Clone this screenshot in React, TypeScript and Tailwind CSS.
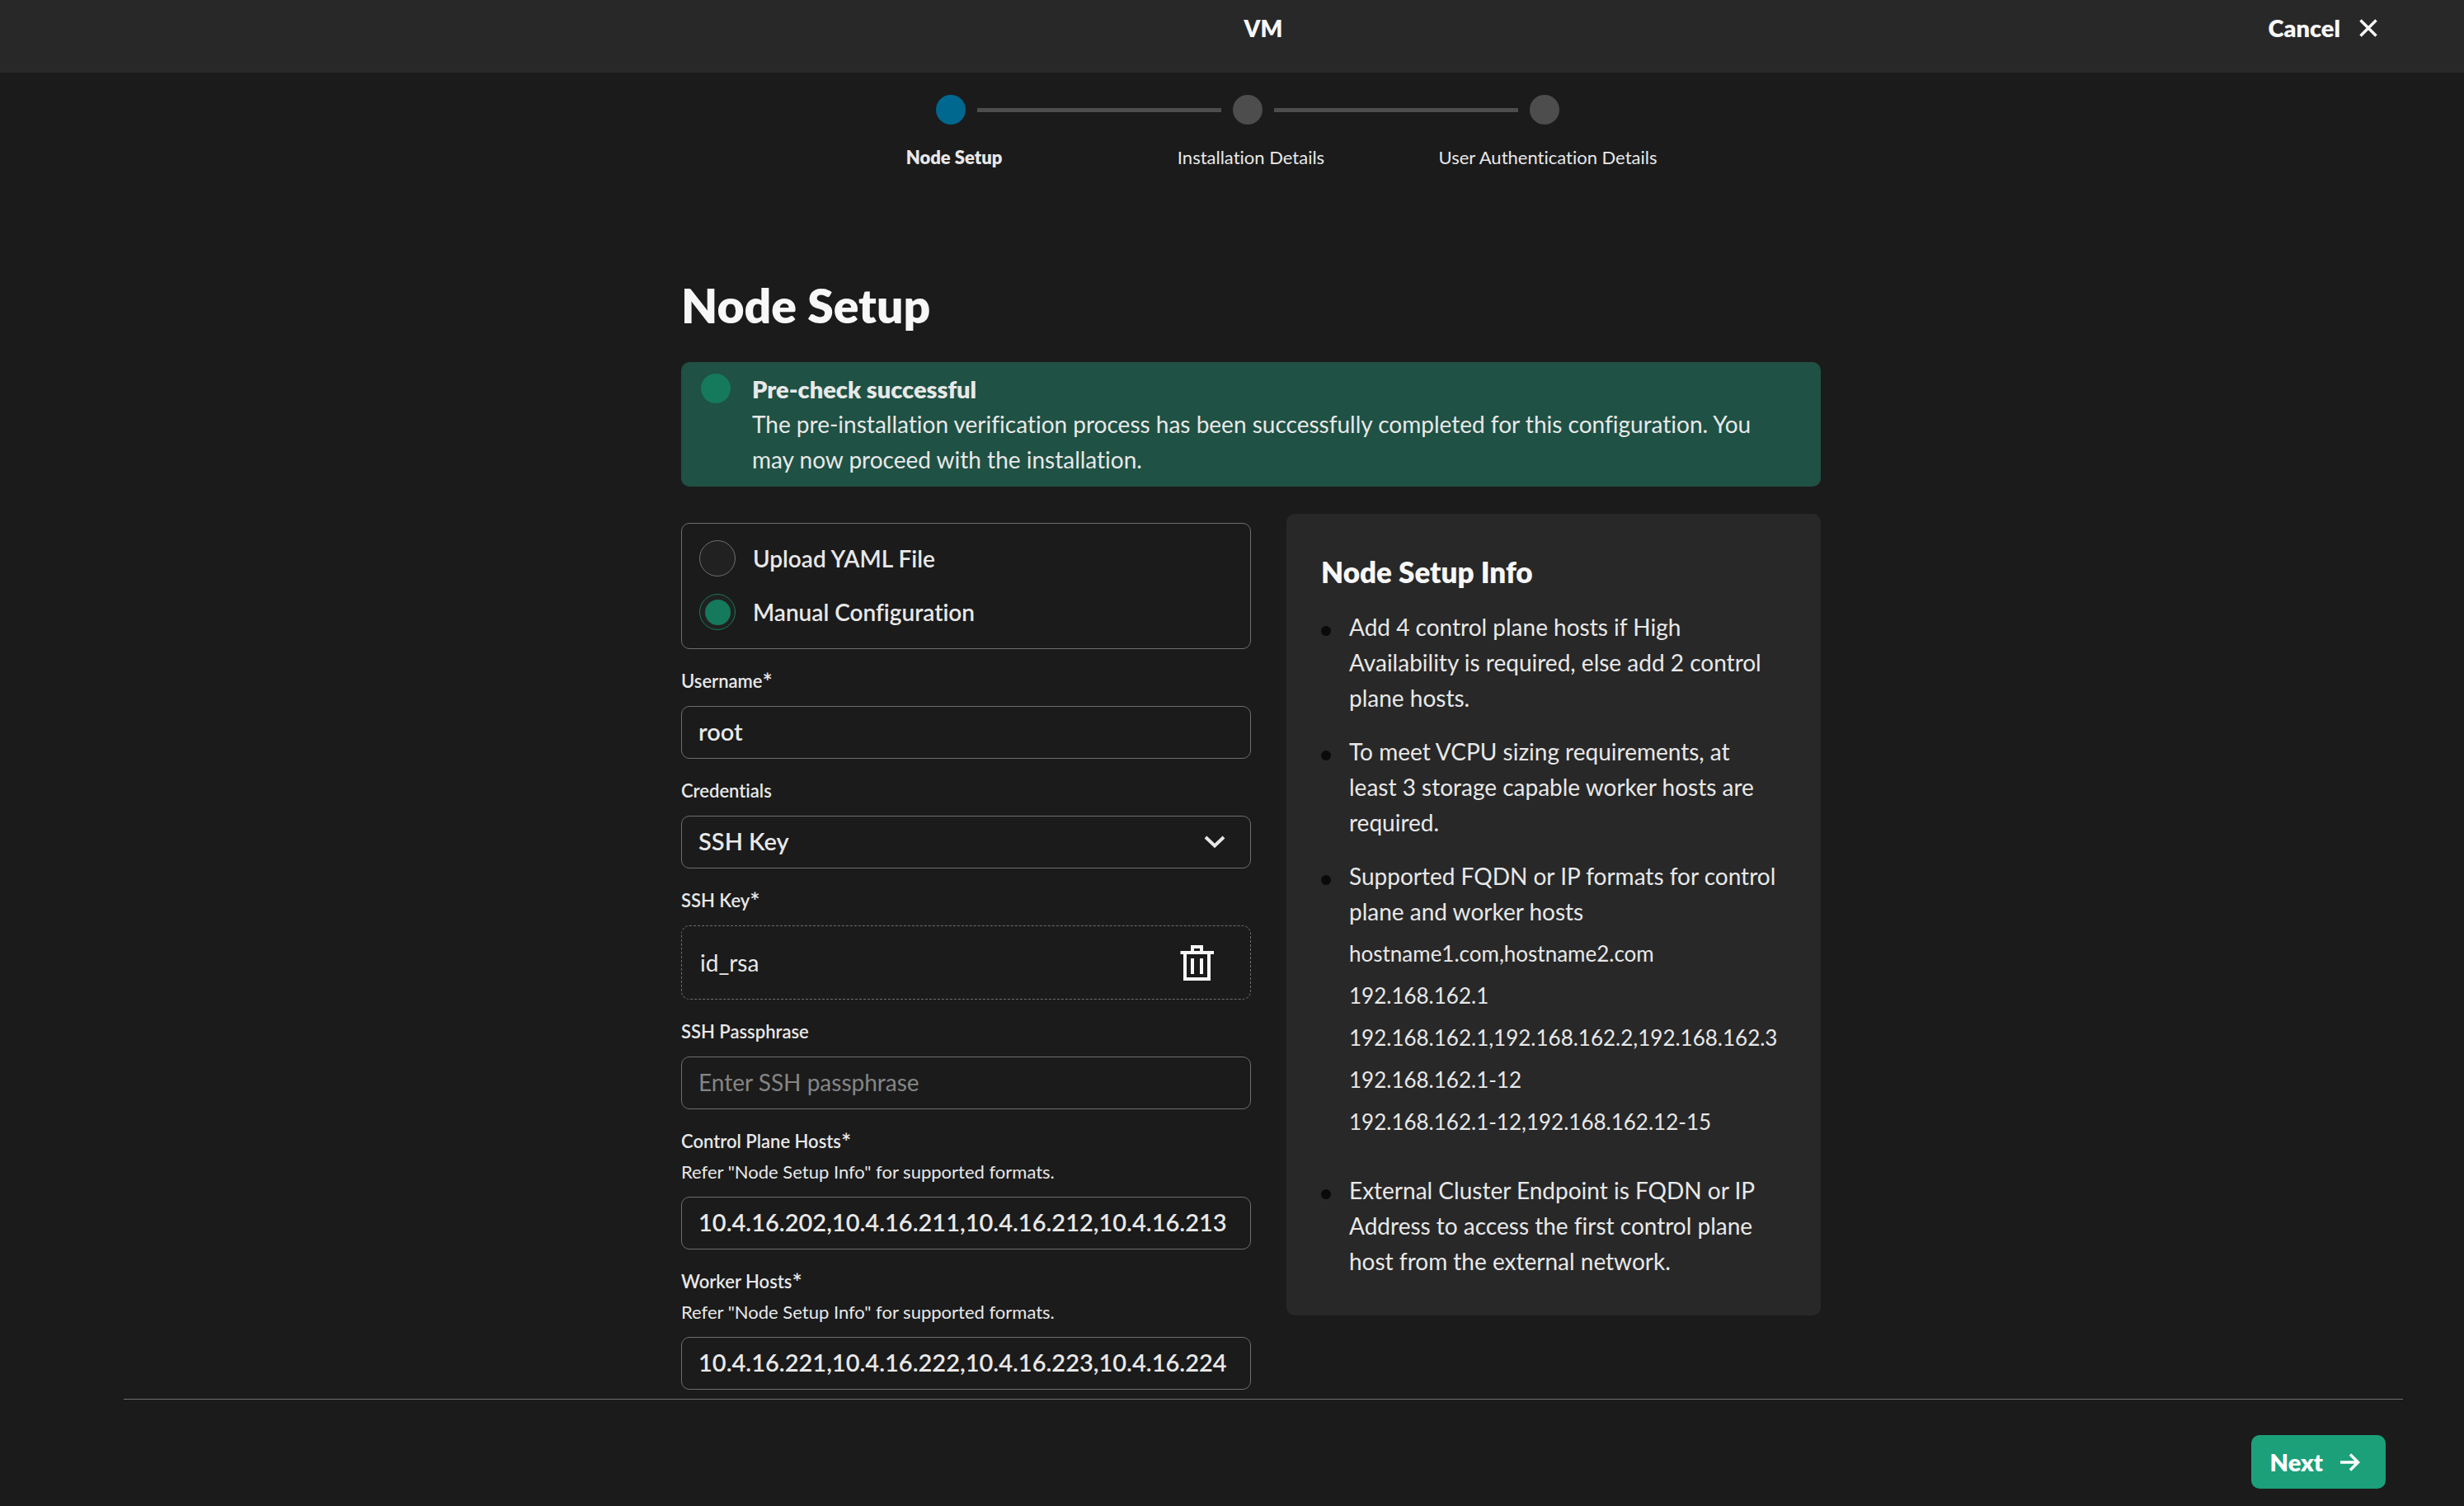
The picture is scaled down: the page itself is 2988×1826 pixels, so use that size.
import { useState } from "react";
import type { ReactNode } from "react";

const steps = ["Node Setup", "Installation Details", "User Authentication Details"];

const ipFormats = [
  "hostname1.com,hostname2.com",
  "192.168.162.1",
  "192.168.162.1,192.168.162.2,192.168.162.3",
  "192.168.162.1-12",
  "192.168.162.1-12,192.168.162.12-15",
];

function CloseIcon() {
  return (
    <svg className="size-6" viewBox="0 0 24 24" fill="none" stroke="currentColor" strokeWidth="3.5" aria-hidden="true">
      <path d="M2.5 2.5l19 19M21.5 2.5l-19 19" />
    </svg>
  );
}

function ArrowIcon() {
  return (
    <svg className="size-9" viewBox="0 0 36 36" fill="none" stroke="currentColor" strokeWidth="3.5" aria-hidden="true">
      <path d="M6 18h22M18 8.5l9.5 9.5-9.5 9.5" />
    </svg>
  );
}

function TrashIcon() {
  return (
    <svg className="size-12" viewBox="0 0 48 48" fill="none" stroke="currentColor" strokeWidth="4" aria-hidden="true">
      <path d="M9 12v32h29V12M3.5 12h40.5M18 12V5h11v7M18 19v19M29 19v19" />
    </svg>
  );
}

function ChevronIcon() {
  return (
    <svg
      className="pointer-events-none absolute top-1/2 right-[30px] size-7 -translate-y-1/2"
      viewBox="0 0 28 28"
      fill="none"
      stroke="currentColor"
      strokeWidth="4"
      aria-hidden="true"
    >
      <path d="M3 8l11 10.5L25 8" />
    </svg>
  );
}

function Stepper() {
  return (
    <nav aria-label="Progress" className="flex flex-col items-center gap-[26px] pt-[27px]">
      <div className="flex items-center gap-3.5 pr-2" aria-hidden="true">
        <span className="size-9 rounded-full bg-[#00678f]" />
        <span className="h-[5px] w-[296px] bg-[#4d4d4d]" />
        <span className="size-9 rounded-full bg-[#4d4d4d]" />
        <span className="h-[5px] w-[296px] bg-[#4d4d4d]" />
        <span className="size-9 rounded-full bg-[#4d4d4d]" />
      </div>
      <ol className="grid w-full max-w-[1080px] grid-cols-3 text-center text-[22px] leading-7">
        {steps.map((step, i) => (
          <li key={step} aria-current={i === 0 ? "step" : undefined} className={i === 0 ? "font-extrabold" : ""}>
            {step}
          </li>
        ))}
      </ol>
    </nav>
  );
}

function Radio({ label, checked, onChange }: { label: string; checked: boolean; onChange: () => void }) {
  return (
    <label className="flex items-center gap-[21px] text-[28px] leading-[44px] font-semibold">
      <input
        type="radio"
        name="mode"
        checked={checked}
        onChange={onChange}
        className="grid size-11 appearance-none place-items-center rounded-full border border-[#6e6e6e] bg-[#212121] checked:border-[#17795a] checked:before:size-[31px] checked:before:rounded-full checked:before:bg-[#147a5b]"
      />
      {label}
    </label>
  );
}

function Field({
  id,
  label,
  required,
  help,
  children,
}: {
  id: string;
  label: string;
  required?: boolean;
  help?: string;
  children: ReactNode;
}) {
  return (
    <div className="flex flex-col gap-4">
      <div className="flex flex-col gap-[9px] text-[22px] leading-7">
        <label htmlFor={id} className="font-semibold">
          {label}
          {required && <span className="align-[-3px] text-[29px] leading-[0]">*</span>}
        </label>
        {help && <p>{help}</p>}
      </div>
      {children}
    </div>
  );
}

const control =
  "h-16 w-full appearance-none rounded-[10px] border border-[#6e6e6e] bg-transparent px-5 pb-[3px] text-[29px] font-semibold placeholder:text-[28px] placeholder:font-normal placeholder:text-[#858585]";

function InfoItem({ children }: { children: ReactNode }) {
  return (
    <li className="flex gap-[22px]">
      <span className="mt-5 size-3 shrink-0 rounded-full bg-[#0a0a0a]" />
      <div className="min-w-0 flex-1">{children}</div>
    </li>
  );
}

export default function App() {
  const [mode, setMode] = useState("manual");
  const [username, setUsername] = useState("root");
  const [passphrase, setPassphrase] = useState("");
  const [controlHosts, setControlHosts] = useState("10.4.16.202,10.4.16.211,10.4.16.212,10.4.16.213");
  const [workerHosts, setWorkerHosts] = useState("10.4.16.221,10.4.16.222,10.4.16.223,10.4.16.224");

  return (
    <div className="flex min-h-screen flex-col bg-[#1b1b1b] font-[Lato,sans-serif] text-[#e8e8e8] [font-variant-ligatures:none]">
      <header className="grid h-[88px] grid-cols-[1fr_auto_1fr] items-start bg-[#282828] pt-3 pr-[74px] pl-[150px] text-[28px] leading-[44px] font-extrabold text-[#f7f7f7]">
        <h1 className="col-start-2">VM</h1>
        <button type="button" className="flex items-center gap-[22px] justify-self-end pr-[30px] text-[29px]">
          Cancel
          <CloseIcon />
        </button>
      </header>

      <main className="flex-1 pl-[46px]">
        <Stepper />

        <form id="node-setup" className="mx-auto w-full max-w-[1382px] pt-[133px]">
          <h2 className="text-[57px] leading-[64px] font-extrabold text-[#f7f7f7]">Node Setup</h2>

          <section role="status" className="mt-[37px] flex gap-[26px] rounded-[10px] bg-[#1f5144] px-6 py-[11px] text-[28px] leading-[43px]">
            <span className="mt-[3px] size-9 shrink-0 rounded-full bg-[#147a5b]" />
            <div className="pr-8">
              <h3 className="text-[29px] font-extrabold">Pre-check successful</h3>
              <p>
                The pre-installation verification process has been successfully completed for this configuration. You may
                now proceed with the installation.
              </p>
            </div>
          </section>

          <div className="mt-[33px] grid grid-cols-[691fr_648fr] items-start gap-[43px]">
            <div className="flex flex-col gap-[25px] pt-[11px]">
              <fieldset
                aria-label="Configuration method"
                className="flex flex-col gap-[21px] rounded-[10px] border border-[#6e6e6e] px-[21px] pt-5 pb-[22px]"
              >
                <Radio label="Upload YAML File" checked={mode === "yaml"} onChange={() => setMode("yaml")} />
                <Radio label="Manual Configuration" checked={mode === "manual"} onChange={() => setMode("manual")} />
              </fieldset>

              <Field id="username" label="Username" required>
                <input id="username" className={control} value={username} onChange={(e) => setUsername(e.target.value)} />
              </Field>

              <Field id="credentials" label="Credentials">
                <div className="relative">
                  <select id="credentials" className={control}>
                    <option>SSH Key</option>
                  </select>
                  <ChevronIcon />
                </div>
              </Field>

              <Field id="ssh-key" label="SSH Key" required>
                <div className="flex h-[90px] items-center justify-between rounded-[10px] border border-dashed border-[#6e6e6e] pr-10 pl-[22px] text-[28px]">
                  <span>id_rsa</span>
                  <button id="ssh-key" type="button" aria-label="Remove SSH key" className="text-[#f7f7f7]">
                    <TrashIcon />
                  </button>
                </div>
              </Field>

              <Field id="passphrase" label="SSH Passphrase">
                <input
                  id="passphrase"
                  type="text"
                  placeholder="Enter SSH passphrase"
                  className={control}
                  value={passphrase}
                  onChange={(e) => setPassphrase(e.target.value)}
                />
              </Field>

              <Field
                id="control-hosts"
                label="Control Plane Hosts"
                required
                help={'Refer "Node Setup Info" for supported formats.'}
              >
                <input
                  id="control-hosts"
                  className={control}
                  value={controlHosts}
                  onChange={(e) => setControlHosts(e.target.value)}
                />
              </Field>

              <Field
                id="worker-hosts"
                label="Worker Hosts"
                required
                help={'Refer "Node Setup Info" for supported formats.'}
              >
                <input
                  id="worker-hosts"
                  className={control}
                  value={workerHosts}
                  onChange={(e) => setWorkerHosts(e.target.value)}
                />
              </Field>
            </div>

            <aside className="rounded-[10px] bg-[#282828] px-[42px] pt-12 pb-11">
              <h3 className="text-[35px] leading-[44px] font-extrabold text-[#f7f7f7]">Node Setup Info</h3>
              <ul className="mt-6 flex flex-col gap-[22px] pr-1 text-[28px] leading-[43px]">
                <InfoItem>
                  Add 4 control plane hosts if High Availability is required, else add 2 control plane hosts.
                </InfoItem>
                <InfoItem>
                  To meet VCPU sizing requirements, at least 3 storage capable worker hosts are required.
                </InfoItem>
                <InfoItem>
                  Supported FQDN or IP formats for control plane and worker hosts
                  <ul className="mt-1 mb-3.5 text-[26px] leading-[51px] whitespace-nowrap">
                    {ipFormats.map((format) => (
                      <li key={format}>{format}</li>
                    ))}
                  </ul>
                </InfoItem>
                <InfoItem>
                  External Cluster Endpoint is FQDN or IP Address to access the first control plane host from the external
                  network.
                </InfoItem>
              </ul>
            </aside>
          </div>
        </form>
      </main>

      <footer className="mt-2.5 mr-[74px] mb-[21px] ml-[150px] flex justify-end border-t border-[#6e6e6e] pt-[43px] pr-[21px]">
        <button
          type="button"
          className="flex h-[65px] items-center gap-[15px] rounded-[10px] bg-[#1ba07a] pr-[25px] pl-[23px] text-[29px] font-extrabold text-white"
        >
          Next
          <ArrowIcon />
        </button>
      </footer>
    </div>
  );
}
